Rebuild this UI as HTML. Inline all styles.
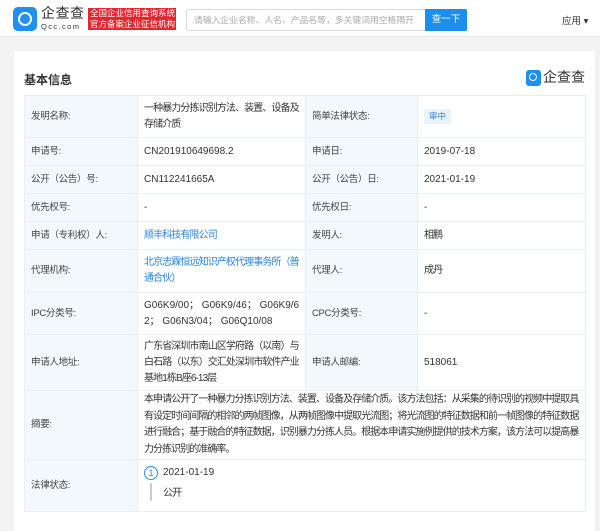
<!DOCTYPE html>
<html><head><meta charset="utf-8"><style>
*{margin:0;padding:0;box-sizing:border-box}
body{width:600px;height:520px;overflow:hidden;background:#f3f3f3;font-family:"Liberation Sans","Noto Sans CJK SC",sans-serif;color:#333;font-size:10px;position:relative}
.hdr{position:absolute;left:0;top:0;width:600px;height:37px;background:#fff;border-bottom:1px solid #e8e8e8}
.logo{position:absolute;left:13px;top:7px;width:24px;height:24px;background:#1f8ff0;border-radius:5px}
.logo:after{content:"";position:absolute;left:5px;top:5px;width:10px;height:10px;border:2px solid #fff;border-radius:50%}
.lt{position:absolute;left:41px;top:5px;font-size:14px;line-height:16px;color:#333;letter-spacing:0.5px}
.ls{position:absolute;left:41px;top:22px;font-size:7.5px;letter-spacing:1.4px;color:#333}
.red{position:absolute;left:88px;top:8px;width:88px;height:22px;background:#e3262f;color:#fff;font-size:8.5px;line-height:10.5px;padding:0 0 0 2px;white-space:nowrap;overflow:hidden}
.search{position:absolute;left:186px;top:9px;width:240px;height:22px;border:1px solid #ddd;border-radius:2px 0 0 2px;color:#aaa;font-size:8.8px;line-height:20px;padding-left:7px;white-space:nowrap;overflow:hidden}
.btn{position:absolute;left:425px;top:9px;width:42px;height:22px;background:#1c8ef0;color:#fff;font-size:9.5px;line-height:22px;text-align:center;border-radius:0 2px 2px 0}
.app{position:absolute;left:562px;top:13px;font-size:9.5px}
.card{position:absolute;left:14px;top:51px;width:581px;height:480px;background:#fff}
.title{position:absolute;left:24px;top:71px;font-size:12px;font-weight:bold;color:#333}
.brand{position:absolute;left:526px;top:70px;width:15px;height:16px;background:#1f8ff0;border-radius:3px}
.brand:after{content:"";position:absolute;left:3px;top:3px;width:6px;height:6px;border:1.5px solid #fff;border-radius:50%}
.brand2{position:absolute;left:543px;top:68px;font-size:14px;line-height:18px;color:#333}
table{position:absolute;left:24px;top:95px;border-collapse:collapse;table-layout:fixed;font-size:10px;letter-spacing:-0.9px}
td{border:1px solid #e6eff6;padding:0 2px 0 6px;vertical-align:middle;line-height:16px}
td.l{background:#f2f8fc;color:#444;font-size:9.5px;letter-spacing:-0.3px}
.n{letter-spacing:0}
a{color:#2a83e0;text-decoration:none}
.tag{display:inline-block;background:#e8f3fd;color:#2a83e0;font-size:8.5px;padding:1px 5px;line-height:13px;letter-spacing:0}
</style></head><body>
<div class="hdr">
<div class="logo"></div>
<div class="lt">企查查</div>
<div class="ls">Qcc.com</div>
<div class="red">全国企业信用查询系统<br>官方备案企业征信机构</div>
<div class="search">请输入企业名称、人名、产品名等，多关键词用空格隔开</div>
<div class="btn">查一下</div>
<div class="app">应用 ▾</div>
</div>
<div class="card"></div>
<div class="title">基本信息</div>
<div class="brand"></div><div class="brand2">企查查</div>
<table>
<colgroup><col style="width:113px"><col style="width:168px"><col style="width:112px"><col style="width:168px"></colgroup>
<tr style="height:42px"><td class="l">发明名称:</td><td>一种暴力分拣识别方法、装置、设备及存储介质</td><td class="l">简单法律状态:</td><td><span class="tag">审中</span></td></tr>
<tr style="height:28px"><td class="l">申请号:</td><td class="n">CN201910649698.2</td><td class="l">申请日:</td><td class="n">2019-07-18</td></tr>
<tr style="height:28px"><td class="l">公开（公告）号:</td><td class="n">CN112241665A</td><td class="l">公开（公告）日:</td><td class="n">2021-01-19</td></tr>
<tr style="height:28px"><td class="l">优先权号:</td><td>-</td><td class="l">优先权日:</td><td>-</td></tr>
<tr style="height:28px"><td class="l">申请（专利权）人:</td><td><a>顺丰科技有限公司</a></td><td class="l">发明人:</td><td>相鹏</td></tr>
<tr style="height:43px"><td class="l">代理机构:</td><td><a>北京志霖恒远知识产权代理事务所（普通合伙）</a></td><td class="l">代理人:</td><td>成丹</td></tr>
<tr style="height:42px"><td class="l">IPC分类号:</td><td class="n" style="word-break:break-all">G06K9/00； G06K9/46； G06K9/62； G06N3/04； G06Q10/08</td><td class="l">CPC分类号:</td><td>-</td></tr>
<tr style="height:56px"><td class="l">申请人地址:</td><td>广东省深圳市南山区学府路（以南）与白石路（以东）交汇处深圳市软件产业基地1栋B座6-13层</td><td class="l">申请人邮编:</td><td class="n">518061</td></tr>
<tr style="height:69px"><td class="l">摘要:</td><td colspan="3" style="line-height:16.5px;letter-spacing:-0.95px">本申请公开了一种暴力分拣识别方法、装置、设备及存储介质。该方法包括：从采集的待识别的视频中提取具有设定时间间隔的相邻的两帧图像，从两帧图像中提取光流图；将光流图的特征数据和前一帧图像的特征数据进行融合；基于融合的特征数据，识别暴力分拣人员。根据本申请实施例提供的技术方案，该方法可以提高暴力分拣识别的准确率。</td></tr>
<tr style="height:52px"><td class="l">法律状态:</td><td colspan="3" style="vertical-align:top;padding-top:6px">
<div style="position:relative;height:40px">
<div style="position:absolute;left:0;top:0;width:14px;height:14px;border:1px solid #2a8ef0;border-radius:50%;color:#2a8ef0;font-size:9px;line-height:12px;text-align:center;letter-spacing:0">1</div>
<div class="n" style="position:absolute;left:19px;top:-1px">2021-01-19</div>
<div style="position:absolute;left:6px;top:17px;width:2px;height:18px;background:#ccc"></div>
<div style="position:absolute;left:19px;top:20px">公开</div>
</div></td></tr>
</table>
</body></html>
